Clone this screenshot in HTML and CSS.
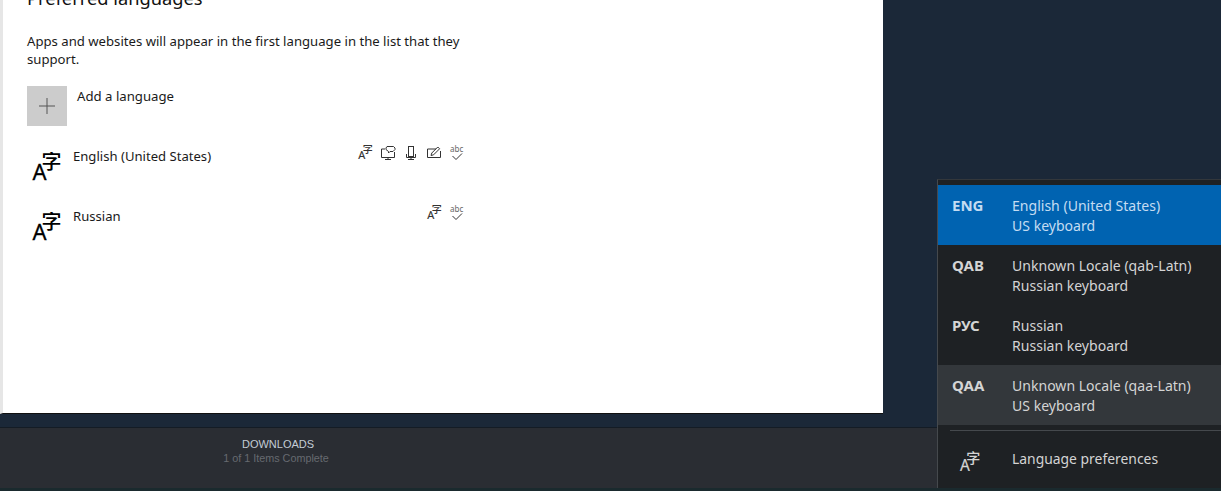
FILE: index.html
```html
<!DOCTYPE html>
<html lang="en">
<head>
  <meta charset="UTF-8">
  <title>Language settings</title>
  <link rel="stylesheet" href="styles.css">
</head>
<body>

  <svg class="defs" width="0" height="0">
    <symbol id="i-lang" viewBox="0 0 30 32">
      <text x="1.500" y="28" class="glyph-a">A</text>
      <text x="10.500" y="16.500" class="glyph-zi">字</text>
    </symbol>
    <symbol id="i-display" viewBox="0 0 16 16">
      <path d="M5 4H1.500v8.500h13V7M5 14.500h6M8 12.500v2" fill="none" stroke="currentColor"/>
      <path d="M7 1.500h6.500l1.500 1.500v1.500L13 6.500H10L8.500 8V6.500L6 4.500V3z" fill="none" stroke="currentColor"/>
    </symbol>
    <symbol id="i-mic" viewBox="0 0 16 16">
      <rect x="5.500" y="1.500" width="5" height="10" fill="none" stroke="currentColor"/>
      <path d="M3.500 9v3.500h9V9M8 12.500v2M5 14.500h6" fill="none" stroke="currentColor"/>
    </symbol>
    <symbol id="i-pen" viewBox="0 0 16 16">
      <path d="M10 4H1.500v8.500h13V6" fill="none" stroke="currentColor"/>
      <path d="M5 10.500l.8-2.500 6-6 1.800 1.800-6 6z" fill="none" stroke="currentColor"/>
    </symbol>
    <symbol id="i-check" viewBox="0 0 16 16">
      <text x="1" y="6.500" class="glyph-abc">abc</text>
      <path d="M3.500 11l3.500 3.500 6-6" fill="none" stroke="currentColor"/>
    </symbol>
  </svg>

  <div class="stage">
    <div class="settings">
      <h2>Preferred languages</h2>
      <p class="intro">Apps and websites will appear in the first language in the list that they support.</p>

      <div class="add-row">
        <div class="add-btn">
          <svg width="16" height="16" viewBox="0 0 16 16"><path d="M8 0v16M0 8h16" stroke="currentColor"/></svg>
        </div>
        <span>Add a language</span>
      </div>

      <div class="lang-row">
        <svg class="lang-icon"><use href="#i-lang"/></svg>
        <span class="lang-name">English (United States)</span>
        <div class="features">
          <svg><use href="#i-lang"/></svg>
          <svg><use href="#i-display"/></svg>
          <svg><use href="#i-mic"/></svg>
          <svg><use href="#i-pen"/></svg>
          <svg><use href="#i-check"/></svg>
        </div>
      </div>

      <div class="lang-row">
        <svg class="lang-icon"><use href="#i-lang"/></svg>
        <span class="lang-name">Russian</span>
        <div class="features">
          <svg><use href="#i-lang"/></svg>
          <svg><use href="#i-check"/></svg>
        </div>
      </div>
    </div>
  </div>

  <div class="bottom-bar">
    <div class="downloads">
      <div class="downloads-title">DOWNLOADS</div>
      <div class="downloads-sub">1 of 1 Items Complete</div>
    </div>
  </div>
  <div class="bottom-edge"></div>

  <div class="flyout">
    <div class="item active">
      <span class="code">ENG</span>
      <span class="desc">English (United States)<br>US keyboard</span>
    </div>
    <div class="item">
      <span class="code">QAB</span>
      <span class="desc">Unknown Locale (qab-Latn)<br>Russian keyboard</span>
    </div>
    <div class="item">
      <span class="code">РУС</span>
      <span class="desc">Russian<br>Russian keyboard</span>
    </div>
    <div class="item hover">
      <span class="code">QAA</span>
      <span class="desc">Unknown Locale (qaa-Latn)<br>US keyboard</span>
    </div>
    <div class="prefs">
      <svg class="prefs-icon"><use href="#i-lang"/></svg>
      <span>Language preferences</span>
    </div>
  </div>

</body>
</html>
```

FILE: styles.css
```css
* {
  box-sizing: border-box;
  margin: 0;
  padding: 0;
}

html, body {
  height: 100%;
}

body {
  display: flex;
  flex-direction: column;
  overflow: hidden;
  background: #1b2838;
  font-family: "Noto Sans", sans-serif;
}

.defs {
  display: none;
}

.glyph-a {
  font-family: "Noto Sans", sans-serif;
  font-size: 22px;
  fill: currentColor;
  stroke: currentColor;
  stroke-width: 0.3px;
}

.glyph-zi {
  font-family: "Noto Sans CJK SC", sans-serif;
  font-size: 20px;
  font-weight: 500;
  fill: currentColor;
}

.glyph-abc {
  font-family: "Noto Sans", sans-serif;
  font-size: 8px;
  fill: #666;
}

/* Settings window */
.stage {
  height: 428px;
  flex: none;
  border-bottom: 1px solid #141c25;
}

.settings {
  width: 883px;
  height: 414px;
  padding-left: 24px;
  background: #fff;
  border-left: 3px solid #e6e6e6;
  border-bottom: 1px solid #111;
  color: #1a1a1a;
  overflow: hidden;
}

h2 {
  margin-top: -15px;
  font-size: 18.3px;
  font-weight: 400;
  line-height: 26px;
  color: #111;
}

.intro {
  width: 440px;
  margin-top: 21px;
  font-size: 13.15px;
  line-height: 18px;
}

.add-row {
  display: flex;
  gap: 10px;
  margin-top: 18px;
  font-size: 13.2px;
  line-height: 20px;
}

.add-btn {
  width: 40px;
  height: 40px;
  display: flex;
  align-items: center;
  justify-content: center;
  background: #ccc;
  color: #555;
}

.lang-row {
  display: flex;
  width: 438px;
  height: 60px;
  margin-top: 20px;
  margin-bottom: -20px;
  font-size: 13.1px;
  line-height: 20px;
}

.lang-icon {
  width: 30px;
  height: 32px;
  margin: 6px 12px 0 4px;
  color: #000;
  flex: none;
}

.features {
  display: flex;
  justify-content: flex-end;
  gap: 7px;
  margin-left: auto;
  margin-top: -1px;
  color: #333;
}

.features svg {
  width: 16px;
  height: 16px;
}

/* Steam bottom bar */
.bottom-bar {
  height: 60px;
  flex: none;
  background: #2a2d33;
}

.downloads {
  width: 556px;
  padding-top: 9px;
  text-align: center;
  font-family: "Liberation Sans", sans-serif;
}

.downloads-title {
  font-size: 11px;
  line-height: 14px;
  color: #c3ccd6;
}

.downloads-sub {
  padding-right: 4px;
  font-size: 10.8px;
  line-height: 14px;
  color: #666a70;
}

.bottom-edge {
  flex: 1;
  background: #1a2a2e;
}

/* Language flyout, over the window */
.flyout {
  position: absolute;
  top: 179px;
  right: 0;
  width: 284px;
  height: 309px;
  padding-top: 5px;
  background: #1e2124;
  border-top: 1px solid #33373b;
  border-left: 1px solid #45494d;
  color: #d4d4d4;
  font-size: 14.05px;
}

.item {
  display: flex;
  height: 60px;
  padding: 11px 0 0 14px;
  line-height: 20px;
}

.item.active {
  background: #0063b1;
  color: #c4dcf2;
}

.item.hover {
  background: #33373b;
}

.code {
  width: 60px;
  margin-top: -1px;
  font-size: 15px;
  font-weight: 700;
}

.prefs {
  display: flex;
  align-items: center;
  height: 58px;
  margin-left: 12px;
  margin-top: 5px;
  padding-bottom: 2px;
  border-top: 1px solid #45494d;
  font-size: 13.9px;
}

.prefs-icon {
  width: 21px;
  height: 23px;
  margin: 8px 32px 0 9px;
  color: #d4d4d4;
}
```
